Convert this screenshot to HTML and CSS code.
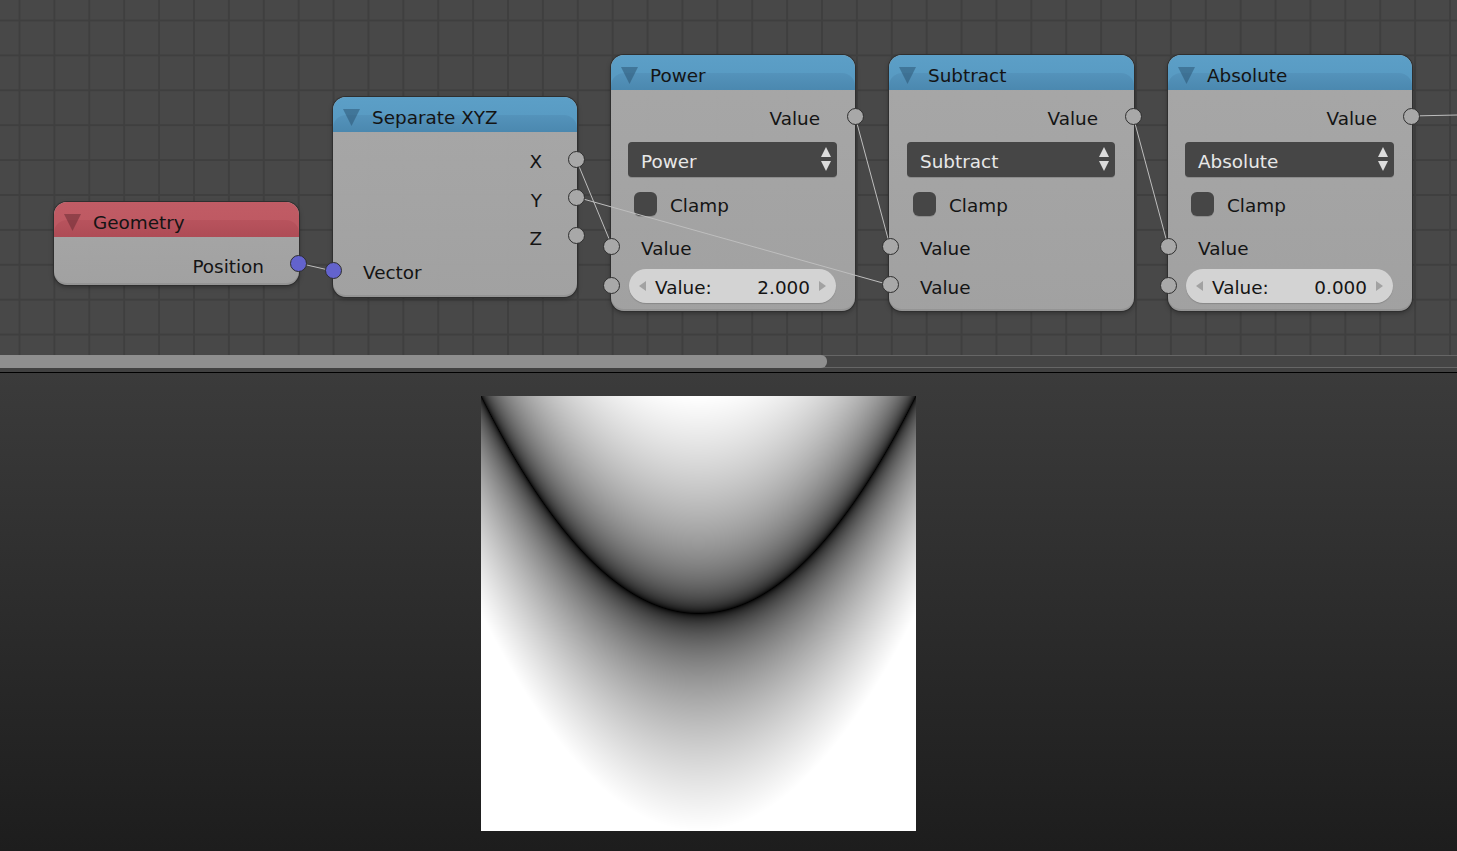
FILE: index.html
```html
<!DOCTYPE html>
<html>
<head>
  <title>Node editor</title>
  <link rel="stylesheet" href="styles.css">
</head>
<body>
  <div class="editor">
    <div class="node node-geometry node-red">
      <div class="node-header">
        <svg class="collapse" viewBox="0 0 16 16"><polygon points="0,0 16,0 8,16"/></svg>
        <span>Geometry</span>
      </div>
      <div class="node-body">
        <div class="row row-out row-short">Position<i class="socket socket-out socket-vec"></i></div>
      </div>
    </div>

    <div class="node node-xyz">
      <div class="node-header">
        <svg class="collapse" viewBox="0 0 16 16"><polygon points="0,0 16,0 8,16"/></svg>
        <span>Separate XYZ</span>
      </div>
      <div class="node-body">
        <div class="row row-out">X<i class="socket socket-out"></i></div>
        <div class="row row-out row-low">Y<i class="socket socket-out"></i></div>
        <div class="row row-out row-low">Z<i class="socket socket-out"></i></div>
        <div class="row row-in row-vector">Vector<i class="socket socket-in socket-vec"></i></div>
      </div>
    </div>

    <div class="node node-power">
      <div class="node-header">
        <svg class="collapse" viewBox="0 0 16 16"><polygon points="0,0 16,0 8,16"/></svg>
        <span>Power</span>
      </div>
      <div class="node-body">
        <div class="row row-out">Value<i class="socket socket-out"></i></div>
        <div class="select">Power
          <svg class="updown" viewBox="0 0 10 24"><polygon points="5,0 10,10 0,10"/><polygon points="0,14 10,14 5,24"/></svg>
        </div>
        <div class="check-row"><i class="check"></i>Clamp</div>
        <div class="row row-in row-value">Value<i class="socket socket-in"></i></div>
        <div class="slider">
          <i class="socket socket-slider"></i>
          <svg class="arrow arrow-left" viewBox="0 0 7 10"><polygon points="7,0 7,10 0,5"/></svg>
          <span>Value:</span><span>2.000</span>
          <svg class="arrow arrow-right" viewBox="0 0 7 10"><polygon points="0,0 7,5 0,10"/></svg>
        </div>
      </div>
    </div>

    <div class="node node-subtract">
      <div class="node-header">
        <svg class="collapse" viewBox="0 0 16 16"><polygon points="0,0 16,0 8,16"/></svg>
        <span>Subtract</span>
      </div>
      <div class="node-body">
        <div class="row row-out">Value<i class="socket socket-out"></i></div>
        <div class="select">Subtract
          <svg class="updown" viewBox="0 0 10 24"><polygon points="5,0 10,10 0,10"/><polygon points="0,14 10,14 5,24"/></svg>
        </div>
        <div class="check-row"><i class="check"></i>Clamp</div>
        <div class="row row-in row-value">Value<i class="socket socket-in"></i></div>
        <div class="row row-in row-last">Value<i class="socket socket-in"></i></div>
      </div>
    </div>

    <div class="node node-absolute">
      <div class="node-header">
        <svg class="collapse" viewBox="0 0 16 16"><polygon points="0,0 16,0 8,16"/></svg>
        <span>Absolute</span>
      </div>
      <div class="node-body">
        <div class="row row-out">Value<i class="socket socket-out"></i></div>
        <div class="select">Absolute
          <svg class="updown" viewBox="0 0 10 24"><polygon points="5,0 10,10 0,10"/><polygon points="0,14 10,14 5,24"/></svg>
        </div>
        <div class="check-row"><i class="check"></i>Clamp</div>
        <div class="row row-in row-value">Value<i class="socket socket-in"></i></div>
        <div class="slider">
          <i class="socket socket-slider"></i>
          <svg class="arrow arrow-left" viewBox="0 0 7 10"><polygon points="7,0 7,10 0,5"/></svg>
          <span>Value:</span><span>0.000</span>
          <svg class="arrow arrow-right" viewBox="0 0 7 10"><polygon points="0,0 7,5 0,10"/></svg>
        </div>
      </div>
    </div>

    <svg class="wires" viewBox="0 0 1457 355">
      <path d="M298 263 L333 271"/>
      <path d="M576 159 L612 246"/>
      <path d="M576 197 L890 285"/>
      <path d="M855 116 L890 246"/>
      <path d="M1133 116 L1168 246"/>
      <path d="M1411 116 L1457 115"/>
    </svg>

    <div class="scrollbar"><div class="scrollbar-thumb"></div></div>
  </div>

  <div class="viewer">
    <canvas id="preview" width="435" height="435"></canvas>
  </div>

  <script src="preview.js"></script>
</body>
</html>
```

FILE: styles.css
```css
body{
    margin: 0px;
    padding: 0px;
    height: 851px;
    overflow: hidden;
    font-family: "DejaVu Sans", sans-serif;
    font-size: 18.4px;
    color: #141414;
}

/* node canvas */
.editor{
    position: relative;
    height: 372px;
    overflow: hidden;
    box-sizing: border-box;
    padding-top: 355px;
    background-color: #484848;
    background-image:
        linear-gradient(to right, #3f3f3f 1.5px, transparent 1.5px),
        linear-gradient(to bottom, #3f3f3f 1.5px, transparent 1.5px);
    background-size: 34.9px 34.9px;
    background-position: 18.5px 19.5px;
}

.wires{
    position: absolute;
    left: 0;
    top: 0;
    width: 1457px;
    height: 355px;
    z-index: 2;
    pointer-events: none;
}
.wires path{
    fill: none;
    stroke: #bebebe;
    stroke-width: 1;
}

.node{
    position: absolute;
    width: 244px;
    box-sizing: border-box;
    border-radius: 13px;
    background: linear-gradient(to bottom, rgba(170, 170, 170, 0.97), rgba(164, 164, 164, 0.97));
    box-shadow: 0 0 0 1px #2f2f2f, 0 2px 5px rgba(0, 0, 0, 0.35), inset 0 -2px 0 rgba(0, 0, 0, 0.08);
}
.node-geometry{ left: 54px; top: 202px; width: 245px; }
.node-xyz{ left: 333px; top: 97px; }
.node-power{ left: 611px; top: 55px; }
.node-subtract{ left: 889px; top: 55px; width: 245px; }
.node-absolute{ left: 1168px; top: 55px; }

.node-header{
    position: relative;
    height: 35px;
    display: flex;
    align-items: center;
    padding-left: 39px;
    border-radius: 13px 13px 0 0;
    background: linear-gradient(to bottom, #5c9fc7, #5698c0);
    overflow: hidden;
}
.node-header::after{
    content: "";
    position: absolute;
    left: 0;
    right: 0;
    bottom: 0;
    height: 17px;
    border-radius: 13px 13px 0 0;
    background: linear-gradient(to bottom, #5493bb, #4b88af);
}
.node-header span{
    position: relative;
    z-index: 1;
    top: 3px;
}
.node-red .node-header{ background: linear-gradient(to bottom, #c15c65, #bc5761); }
.node-red .node-header::after{ background: linear-gradient(to bottom, #b8535d, #ae4c56); }

.collapse{
    position: absolute;
    left: 10px;
    top: 12px;
    width: 17px;
    height: 17px;
    z-index: 1;
    fill: rgba(40, 80, 110, 0.5);
}
.node-red .collapse{ fill: rgba(100, 40, 48, 0.5); }

.node-body{
    padding: 9px 18px 8px 17px;
}
.node-subtract .node-body{
    padding-left: 18px;
    padding-right: 19px;
}
.node-xyz .node-body{
    padding-top: 10px;
    padding-bottom: 6px;
}
.node-geometry .node-body{
    padding-top: 15px;
    padding-bottom: 3px;
}

.row{
    position: relative;
    height: 38px;
    line-height: 40px;
}
.row-out{
    text-align: right;
    padding-right: 17px;
}
.row-in{
    padding-left: 13px;
}
.row-short{
    height: 30px;
    line-height: 30px;
}
.row-low{
    line-height: 42px;
}
.row-vector{
    margin-top: -3px;
}
.row-value{
    margin-top: 13px;
}
.row-last{
    height: 35px;
    margin-top: 1px;
}

.socket{
    position: absolute;
    width: 17px;
    height: 17px;
    box-sizing: border-box;
    border: 1px solid #2e2e2e;
    border-radius: 50%;
    background: #a8a8a8;
    top: 9px;
    z-index: 3;
}
.socket-out{
    right: -26px;
}
.node-power .socket-out,
.node-subtract .socket-out{
    right: -26.5px;
}
.socket-in{
    left: -25.5px;
}
.socket-vec{
    background: #6363cd;
}
.row-short .socket{
    top: 3px;
}
.row-last .socket{
    top: 8px;
}
.socket-slider{
    left: -26.5px;
    top: 8px;
}

.select{
    position: relative;
    height: 35px;
    line-height: 39px;
    margin: 5px 0 0 0;
    padding-left: 13px;
    box-sizing: border-box;
    border-radius: 4px;
    background: #464646;
    color: #e8e8e8;
    box-shadow: 0 1px 0 #8c8c8c;
}
.updown{
    position: absolute;
    right: 6px;
    top: 5px;
    width: 10px;
    height: 24px;
    fill: #dcdcdc;
}

.check-row{
    display: flex;
    align-items: flex-start;
    height: 24px;
    line-height: 28px;
    margin-top: 15px;
    padding-left: 6px;
}
.check{
    width: 23px;
    height: 24px;
    margin-right: 13px;
    border-radius: 6px;
    background: #464646;
    box-shadow: 0 1px 0 #8c8c8c;
}

.slider{
    position: relative;
    display: flex;
    justify-content: space-between;
    align-items: center;
    height: 34px;
    margin: 2px 1px 0 1px;
    padding: 2px 26px 0 26px;
    box-sizing: border-box;
    border-radius: 17px;
    background: #d3d3d3;
    box-shadow: 0 1px 1px #888;
}
.arrow{
    position: absolute;
    top: 12px;
    width: 7px;
    height: 10px;
    fill: #a2a2a2;
}
.arrow-left{ left: 10px; }
.arrow-right{ right: 10px; }

/* scrollbar under the canvas */
.scrollbar{
    height: 13px;
    background: #454545;
    border-top: 1px solid #666;
    border-bottom: 1px solid #666;
    box-sizing: border-box;
    box-shadow: 0 4px 0 #414141;
}
.scrollbar-thumb{
    width: 827px;
    height: 13px;
    margin-top: -1px;
    border-radius: 0 6px 6px 0;
    background: #8f8f8f;
}

/* render result */
.viewer{
    height: 479px;
    box-sizing: border-box;
    padding: 23px 0 0 481px;
    border-top: 1px solid #000;
    background: linear-gradient(to bottom, #3b3b3b, #1d1d1d);
}
#preview{
    display: block;
}
```

FILE: preview.js
```js
// abs(x^2 - y), same maths as the node chain above
var canvas = document.getElementById('preview');
var ctx = canvas.getContext('2d');
var size = canvas.width;
var img = ctx.createImageData(size, size);

function toSrgb(v){
  if(v >= 1) return 255;
  if(v <= 0.0031308) return v * 12.92 * 255;
  return (1.055 * Math.pow(v, 1 / 2.4) - 0.055) * 255;
}

for(var j = 0; j < size; j++){
  for(var i = 0; i < size; i++){
    var x = (i + 0.5) / size * 2 - 1;
    var y = 1 - (j + 0.5) / size * 2;
    var c = toSrgb(Math.abs(x * x - y));
    var p = (j * size + i) * 4;
    img.data[p] = c;
    img.data[p + 1] = c;
    img.data[p + 2] = c;
    img.data[p + 3] = 255;
  }
}
ctx.putImageData(img, 0, 0);
```
